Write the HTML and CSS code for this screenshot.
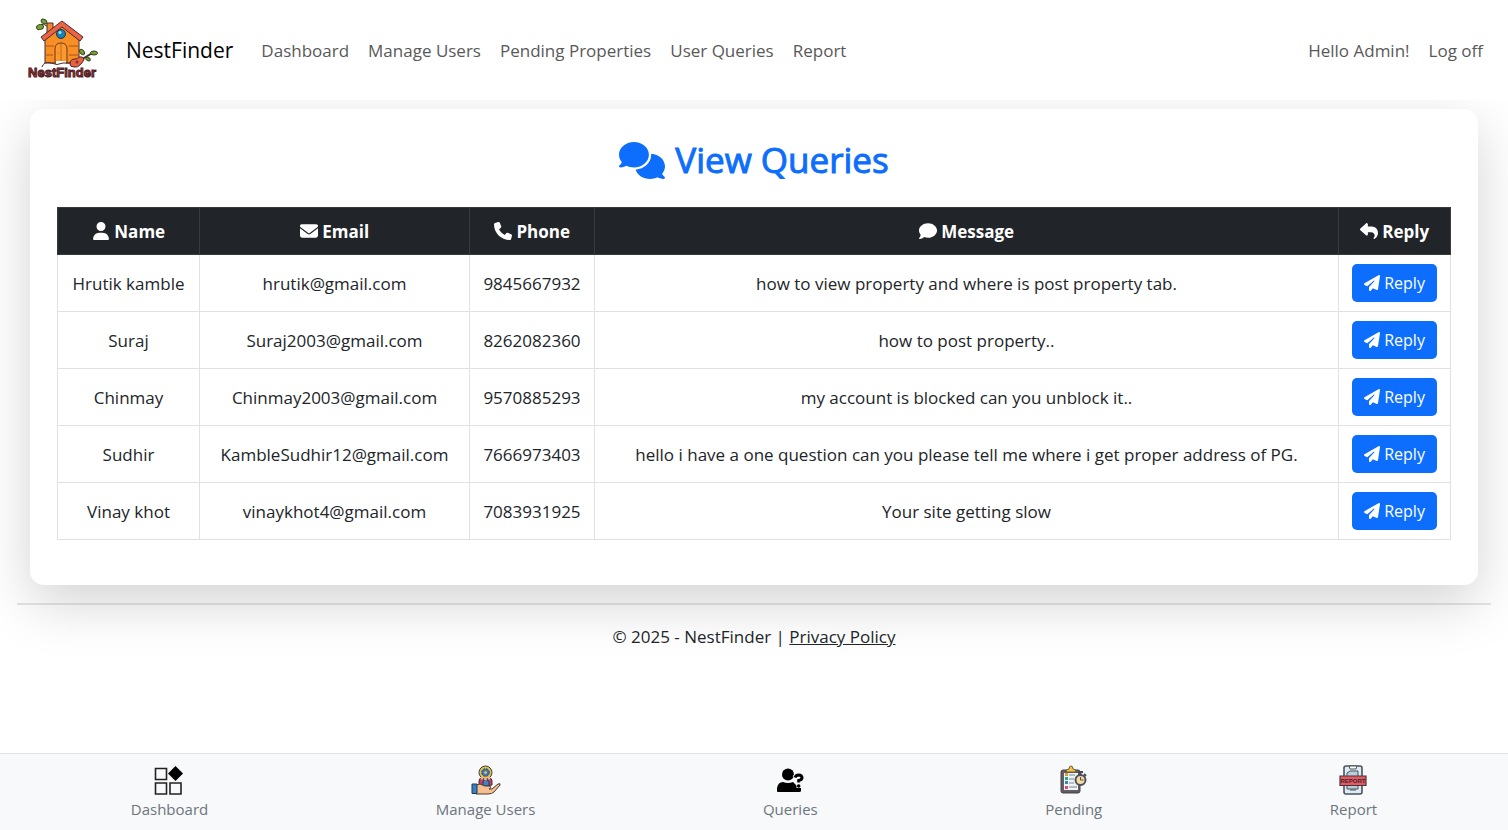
FILE: index.html
```html
<!DOCTYPE html>
<html lang="en">
<head>
<meta charset="utf-8">
<meta name="viewport" content="width=device-width, initial-scale=1">
<title>View Queries - NestFinder</title>
<link rel="stylesheet" href="styles.css">
</head>
<body>
<svg class="sprite" aria-hidden="true">
  <symbol id="plane" viewBox="0 0 512 512"><path d="M498.1 5.6c10.1 7 15.4 19.1 13.5 31.2l-64 416c-1.5 9.7-7.4 18.2-16 23s-18.9 5.4-28 1.6L284 427.7l-68.5 74.1c-8.9 9.7-22.9 12.9-35.2 8.1S160 493.2 160 480l0-83.6c0-4 1.5-7.8 4.2-10.8L331.8 202.8c5.8-6.3 5.6-16-.4-22s-15.7-6.4-22-.7L106 360.8 17.7 316.6C7.1 311.3 .3 300.7 0 288.9s5.9-22.8 16.1-28.7l448-256c10.7-6.1 23.9-5.5 34 1.4z"/></symbol>
</svg>
<header class="navbar">
  <a class="logo" href="#" aria-label="NestFinder home">
    <svg width="74" height="64" viewBox="0 0 74 64">
      <path d="M22 5h6v10h-6z" fill="#f5862a" stroke="#4a2a2c"/>
      <path d="M20 19L36 6l18 14v25H20z" fill="#f98e24" stroke="#4a2a2c"/>
      <path d="M21 28h8M21 37h7M44 28h9M44 37h9" stroke="#a3541d"/>
      <path d="M30 45V31q0-6 6-6t6 6v14z" fill="#fb9a2c" stroke="#6b3520"/>
      <path d="M36 26v18M33 35h1" stroke="#c2691e"/>
      <path d="M31 43h10v3H31z" fill="#fff"/>
      <path d="M16 19L37 3l21 16-3 4L37 9 19 23z" fill="#ea6346" stroke="#4a2a2c"/>
      <circle cx="36" cy="16" r="4.5" fill="#1b80b5" stroke="#18384f"/>
      <circle cx="35" cy="14.500" r="1.500" fill="#a6e3f5"/>
      <path d="M17 49q2-6 9-4 6 3 12 0 8-1 12 2" fill="none" stroke="#4a2a2c"/>
      <path d="M22 8q-4-3-6-1" fill="none" stroke="#4a2a2c"/>
      <ellipse cx="19" cy="3.500" rx="3" ry="2" transform="rotate(30 19 3.500)" fill="#78a235" stroke="#33451d"/>
      <ellipse cx="15" cy="9" rx="3.500" ry="2.500" transform="rotate(-20 15 9)" fill="#78a235" stroke="#33451d"/>
      <path d="M54 43L69 34" stroke="#4a2a2c" stroke-width="2"/>
      <path d="M45 46q0-5 5-5 3 0 4-2 4-1 5 2-1 3-3 5-3 4-7 3-4 0-4-3z" fill="#e8623f" stroke="#4a2a2c"/>
      <circle cx="52" cy="44" r="1.500" fill="#8d3126"/>
      <ellipse cx="57" cy="34" rx="3" ry="2" transform="rotate(50 57 34)" fill="#78a235" stroke="#33451d"/>
      <ellipse cx="69" cy="35" rx="3.500" ry="2" fill="#78a235" stroke="#33451d"/>
      <ellipse cx="63" cy="41" rx="2.500" ry="1.500" transform="rotate(30 63 41)" fill="#78a235" stroke="#33451d"/>
      <text x="37" y="59" text-anchor="middle" class="logo-text">NestFinder</text>
    </svg>
  </a>
  <a class="brand" href="#">NestFinder</a>
  <nav class="links">
    <a href="#">Dashboard</a><a href="#">Manage Users</a><a href="#">Pending Properties</a><a href="#">User Queries</a><a href="#">Report</a>
  </nav>
  <div class="links account"><span>Hello Admin!</span><a href="#">Log off</a></div>
</header>
<main class="content">
  <section class="card">
    <h1 class="title">
      <svg class="title-icon" viewBox="0 0 640 512"><path d="M208 352c114.900 0 208-78.800 208-176S322.900 0 208 0S0 78.800 0 176c0 38.600 14.700 74.300 39.600 103.400c-3.500 9.400-8.700 17.700-14.200 24.700c-4.800 6.200-9.700 11-13.300 14.300c-1.800 1.600-3.300 2.900-4.300 3.700c-.5 .4-.9 .7-1.100 .8l-.2 .2C1 327.200-1.400 334.400 .8 340.900S9.100 352 16 352c21.800 0 43.800-5.600 62.100-12.500c9.200-3.500 17.800-7.400 25.200-11.400C134.100 343.300 169.800 352 208 352zM448 176c0 112.300-99.100 196.900-216.500 207C255.800 457.400 336.400 512 432 512c38.200 0 73.900-8.700 104.700-23.900c7.500 4 16 7.900 25.200 11.400c18.300 6.900 40.300 12.500 62.100 12.500c6.900 0 13.100-4.500 15.200-11.100c2.100-6.600-.2-13.800-5.800-17.900l-.2-.2c-.2-.2-.6-.4-1.100-.8c-1-.8-2.500-2-4.300-3.700c-3.600-3.300-8.500-8.100-13.300-14.300c-5.500-7-10.700-15.400-14.200-24.700c24.900-29 39.600-64.700 39.600-103.400c0-92.800-84.900-168.900-192.600-175.500c.4 5.100 .6 10.300 .6 15.500z"/></svg>
      View Queries
    </h1>
    <table class="queries">
      <colgroup><col class="col-name"><col class="col-email"><col class="col-phone"><col><col class="col-reply"></colgroup>
      <thead>
        <tr>
          <th><svg class="icon" viewBox="-32 0 512 512"><path d="M224 256A128 128 0 1 0 224 0a128 128 0 1 0 0 256zm-45.700 48C79.800 304 0 383.800 0 482.300C0 498.700 13.300 512 29.700 512l388.600 0c16.400 0 29.700-13.300 29.700-29.700C448 383.800 368.200 304 269.700 304l-91.400 0z"/></svg> Name</th>
          <th><svg class="icon" viewBox="0 0 512 512"><path d="M48 64C21.500 64 0 85.500 0 112c0 15.100 7.100 29.300 19.200 38.400L236.800 313.600c11.400 8.500 27 8.500 38.400 0L492.800 150.400c12.100-9.100 19.200-23.300 19.200-38.400c0-26.500-21.500-48-48-48L48 64zM0 176L0 384c0 35.300 28.700 64 64 64l384 0c35.300 0 64-28.700 64-64l0-208L294.400 339.200c-22.800 17.100-54 17.100-76.800 0L0 176z"/></svg> Email</th>
          <th><svg class="icon" viewBox="0 0 512 512"><path d="M164.900 24.600c-7.700-18.600-28-28.500-47.400-23.200l-88 24C12.100 30.200 0 46 0 64C0 311.400 200.600 512 448 512c18 0 33.800-12.100 38.600-29.500l24-88c5.300-19.400-4.600-39.700-23.200-47.400l-96-40c-16.300-6.800-35.200-2.100-46.300 11.600L304.700 368C234.300 334.700 177.300 277.700 144 207.300L193.300 167c13.700-11.200 18.400-30 11.600-46.300l-40-96z"/></svg> Phone</th>
          <th><svg class="icon" viewBox="0 0 512 512"><path d="M512 240c0 114.900-114.600 208-256 208c-37.100 0-72.300-6.400-104.100-17.900c-11.900 8.700-31.300 20.600-54.300 30.600C73.600 471.100 44.700 480 16 480c-6.500 0-12.300-3.900-14.800-9.900c-2.500-6-1.100-12.800 3.400-17.400c0 0 .3-.3 .3-.3s.7-.7 1.300-1.400c1.100-1.200 2.800-3.100 4.900-5.700c4.100-5 9.600-12.400 15.200-21.600c10-16.600 19.500-38.400 21.400-62.900C17.700 326.800 0 285.100 0 240C0 125.100 114.600 32 256 32s256 93.100 256 208z"/></svg> Message</th>
          <th><svg class="icon" viewBox="0 0 512 512"><path d="M205 34.800c11.500 5.100 19 16.600 19 29.200l0 64 112 0c97.200 0 176 78.800 176 176c0 113.300-81.500 163.900-100.200 174.100c-2.500 1.400-5.300 1.900-8.100 1.900c-10.900 0-19.700-8.900-19.700-19.700c0-7.500 4.300-14.400 9.800-19.500c9.400-8.800 22.200-26.400 22.200-56.700c0-53-43-96-96-96l-96 0 0 64c0 12.600-7.400 24.100-19 29.200s-25 3-34.400-5.400l-160-144C3.900 225.700 0 217.100 0 208s3.900-17.700 10.600-23.800l160-144c9.400-8.500 22.900-10.600 34.400-5.400z"/></svg> Reply</th>
        </tr>
      </thead>
      <tbody>
        <tr><td>Hrutik kamble</td><td>hrutik@gmail.com</td><td>9845667932</td><td>how to view property and where is post property tab.</td><td><button class="reply" type="button"><svg class="icon"><use href="#plane"/></svg> Reply</button></td></tr>
        <tr><td>Suraj</td><td>Suraj2003@gmail.com</td><td>8262082360</td><td>how to post property..</td><td><button class="reply" type="button"><svg class="icon"><use href="#plane"/></svg> Reply</button></td></tr>
        <tr><td>Chinmay</td><td>Chinmay2003@gmail.com</td><td>9570885293</td><td>my account is blocked can you unblock it..</td><td><button class="reply" type="button"><svg class="icon"><use href="#plane"/></svg> Reply</button></td></tr>
        <tr><td>Sudhir</td><td>KambleSudhir12@gmail.com</td><td>7666973403</td><td>hello i have a one question can you please tell me where i get proper address of PG.</td><td><button class="reply" type="button"><svg class="icon"><use href="#plane"/></svg> Reply</button></td></tr>
        <tr><td>Vinay khot</td><td>vinaykhot4@gmail.com</td><td>7083931925</td><td>Your site getting slow</td><td><button class="reply" type="button"><svg class="icon"><use href="#plane"/></svg> Reply</button></td></tr>
      </tbody>
    </table>
  </section>
  <footer class="footer">© 2025 - NestFinder | <a href="#">Privacy Policy</a></footer>
</main>
<nav class="tabs" aria-label="Sections">
  <a href="#">
    <svg width="30" height="30" viewBox="0 0 30 30"><g fill="none" stroke="#222" stroke-width="1.600"><path d="M1.500 3.500h11v11h-11zM1.500 18h11v11h-11zM16 18h11v11H16z"/></g><path d="M21.500 1l7.500 7.500-7.500 7.500L14 8.500z" fill="#000"/></svg>
    Dashboard</a>
  <a href="#">
    <svg width="30" height="30" viewBox="0 0 30 30">
      <circle cx="14.500" cy="7.500" r="6.500" fill="#e0c04c" stroke="#3d3f3c"/>
      <circle cx="14.500" cy="7.500" r="3.800" fill="#3f78b8" stroke="#2c4358" stroke-dasharray="2 1"/>
      <circle cx="14.500" cy="7.500" r="1.300" fill="#e9cf63"/>
      <path d="M8 20v-4q0-3 3-3t2 3v5zM21 20v-4q0-3-3-3t-2 3v5z" fill="#c43e68" stroke="#413038"/>
      <path d="M12 21v-4q0-2 3-2t3 2v4z" fill="#3b82c6" stroke="#2b3b4d"/>
      <circle cx="11" cy="13" r="1.500" fill="#e9b08c"/><circle cx="18" cy="13" r="1.500" fill="#e9b08c"/><circle cx="14.500" cy="14" r="1.500" fill="#e9b08c"/>
      <path d="M5 20l4-1 5 2h5q2 2-1 3h3l6-5q3-1 2 1l-6 7q-2 2-6 2H5z" fill="#f5bf91" stroke="#4c3932"/>
      <path d="M1 19h5v9.500H1z" fill="#3480c5" stroke="#25394e"/>
    </svg>
    Manage Users</a>
  <a href="#">
    <svg width="30" height="30" viewBox="0 0 30 30"><circle cx="13" cy="9.500" r="6" fill="#000"/><path d="M2 26v-3q1-6 6-6 5 2 10 0l4 4 4 2v3q0 1-2 1H3q-1 0-1-1z" fill="#000"/><g fill="none"><path d="M20 12.500q1-2.500 3.500-2.500 3.500.2 3.500 2.700 0 2-3.300 2.800v1.500M24 20v3" stroke="#f8f9fa" stroke-width="5"/><path d="M20 12.500q1-2.500 3.500-2.500 3.500.2 3.500 2.700 0 2-3.300 2.800v2" stroke="#000" stroke-width="3"/></g><circle cx="23.700" cy="21" r="1.800" fill="#000"/></svg>
    Queries</a>
  <a href="#">
    <svg width="30" height="30" viewBox="0 0 30 30">
      <rect x="2" y="5" width="19" height="23" rx="2" fill="#625c63" stroke="#474249"/>
      <path d="M5 8h14v17H5z" fill="#edf3f7"/>
      <path d="M7 7q0-3 3-3 0-3 2-3t2 3q3 0 3 3z" fill="#f5c747" stroke="#6a5937"/>
      <path d="M6 8h3v3H6z" fill="#d6a238"/><path d="M6 12h3v3H6z" fill="#2aa77d"/><path d="M6 16h3v3H6z" fill="#3986b1"/><path d="M6 21h3v3H6z" fill="#d94e5c"/>
      <path d="M10 10h6M10 14h5M10 18h5M10 22h8" stroke="#77838c"/>
      <path d="M19 7h5M21.500 7v4M25 9l2 2" stroke="#474a52" stroke-width="2"/>
      <circle cx="21.500" cy="15" r="5" fill="#f7d8a4" stroke="#4c505b" stroke-width="2"/>
      <path d="M21.500 12v3h3" fill="none" stroke="#4c505b"/>
    </svg>
    Pending</a>
  <a href="#">
    <svg width="30" height="30" viewBox="0 0 30 30">
      <rect x="6" y="1" width="18" height="28" rx="2" fill="#dcecf7" stroke="#4d535a" stroke-width="1.600"/>
      <path d="M11 1h8l-1 3h-6z" fill="#fff" stroke="#4d535a"/>
      <path d="M9 11V8l3-2h8v5M9 20v4h11v-4" fill="#b8cedd" stroke="#4d535a"/>
      <path d="M12 25h6" stroke="#4d535a"/>
      <path d="M2 11h26v9.500H2z" fill="#e35a62" stroke="#4a3438" stroke-width="1.200"/>
      <text x="15" y="18" text-anchor="middle" class="stamp">REPORT</text>
    </svg>
    Report</a>
</nav>
</body>
</html>
```

FILE: styles.css
```css
* { box-sizing: border-box; }
body {
  margin: 0;
  min-height: 100vh;
  display: flex;
  flex-direction: column;
  background: #fff;
  color: #212529;
  font: 17px/27px "Segoe UI", "Open Sans", "Noto Sans", sans-serif;
}
a { color: inherit; text-decoration: none; }
.sprite { display: none; }

.navbar {
  position: relative;
  z-index: 1;
  display: flex;
  align-items: center;
  height: 100px;
  padding: 0 25px;
  background: #fff;
}
.logo { display: flex; margin-right: 27px; }
.logo-text {
  font: 900 13px "Liberation Sans", sans-serif;
  fill: #a33b39;
  stroke: #4f2025;
  stroke-width: 1px;
}
.brand { margin-right: 28px; font-size: 21px; color: #000; }
.links { display: flex; gap: 19px; color: #595959; }
.account { margin-left: auto; }

.content { flex: 1; padding: 9px 17px 0; }
.card {
  margin: 0 13px;
  padding: 27px 27px 45px;
  border-radius: 14px;
  background: #fff;
  box-shadow: 0 18px 55px rgba(0, 0, 0, .175);
}
.title {
  display: flex;
  align-items: center;
  justify-content: center;
  gap: 10px;
  margin: 0 0 23px;
  font-size: 35px;
  font-weight: 500;
  line-height: 48px;
  color: #0d6efd;
  -webkit-text-stroke: 1px currentColor;
}
.title-icon { width: 46px; height: 37px; fill: currentColor; }
.icon { width: 18px; height: 18px; fill: currentColor; vertical-align: -2px; }

.queries {
  width: 100%;
  border-collapse: collapse;
  text-align: center;
}
.queries th {
  height: 47px;
  padding: 1px 0 0;
  border: 1px solid #373b3e;
  background: #212529;
  color: #fff;
  font-weight: 700;
}
.queries td {
  height: 57px;
  padding: 0 4px;
  border: 1px solid #dee2e6;
}
.col-name { width: 142px; }
.col-email { width: 270px; }
.col-phone { width: 125px; }
.col-reply { width: 112px; }
.reply {
  height: 38px;
  padding: 0 12px;
  border: 0;
  border-radius: 5px;
  background: #0d6efd;
  color: #fff;
  font: inherit;
  font-size: 16px;
  white-space: nowrap;
}
.reply .icon { width: 16px; height: 16px; }

.footer {
  margin-top: 18px;
  padding-top: 18px;
  border-top: 2px solid rgba(0, 0, 0, .1);
  text-align: center;
}
.footer a { text-decoration: underline; }

.tabs {
  display: flex;
  justify-content: space-around;
  padding: 11px 17px 7px;
  border-top: 1px solid #dee2e6;
  background: #f8f9fa;
  color: #6c757d;
  font-size: 15px;
}
.tabs a {
  display: flex;
  flex-direction: column;
  align-items: center;
  gap: 1px;
}
.stamp {
  font: 700 6px "Liberation Sans", sans-serif;
  fill: #43262b;
}
```
